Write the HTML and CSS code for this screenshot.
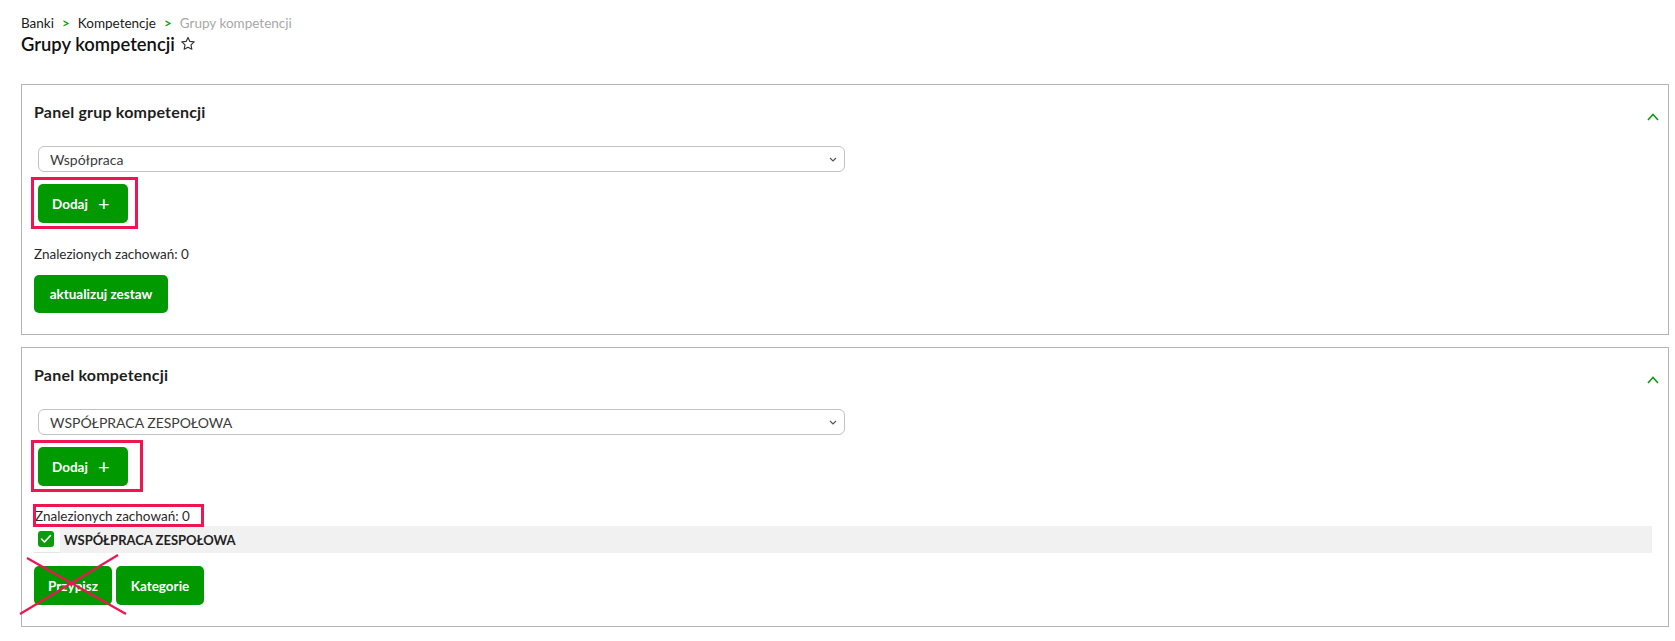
FILE: index.html
```html
<!DOCTYPE html>
<html lang="pl">
<head>
<meta charset="utf-8">
<title>Grupy kompetencji</title>
<link rel="stylesheet" href="styles.css">
</head>
<body>
<div class="page">
  <nav class="breadcrumb">
    <span class="crumb">Banki</span><span class="sep">&gt;</span><span class="crumb">Kompetencje</span><span class="sep">&gt;</span><span class="crumb current">Grupy kompetencji</span>
  </nav>
  <h1 class="page-title">Grupy kompetencji
    <svg class="star" width="16" height="15" viewBox="0 0 24 23"><path d="M12 2.2l2.9 6.1 6.6.8-4.9 4.6 1.3 6.6L12 17.1l-5.9 3.2 1.3-6.6-4.9-4.6 6.6-.8z" fill="none" stroke="#333" stroke-width="1.8" stroke-linejoin="round"/></svg>
  </h1>

  <section class="panel">
    <div class="panel-head">
      <h2 class="panel-title">Panel grup kompetencji</h2>
      <svg class="chev" width="12" height="8" viewBox="0 0 12 8"><path d="M1 7l5-5.5L11 7" fill="none" stroke="#119911" stroke-width="1.6"/></svg>
    </div>
    <div class="field">
      <div class="select"><span>Współpraca</span>
        <svg width="8" height="5" viewBox="0 0 8 5"><path d="M1 1l3 3 3-3" fill="none" stroke="#555" stroke-width="1.2"/></svg>
      </div>
      <div class="marked add-wrap">
        <button class="btn btn-add">Dodaj <span class="plus">+</span></button>
        <span class="mark mark-add1"></span>
      </div>
    </div>
    <p class="count count-1">Znalezionych zachowań: 0</p>
    <button class="btn btn-wide">aktualizuj zestaw</button>
  </section>

  <section class="panel">
    <div class="panel-head">
      <h2 class="panel-title">Panel kompetencji</h2>
      <svg class="chev" width="12" height="8" viewBox="0 0 12 8"><path d="M1 7l5-5.5L11 7" fill="none" stroke="#119911" stroke-width="1.6"/></svg>
    </div>
    <div class="field">
      <div class="select"><span>WSPÓŁPRACA ZESPOŁOWA</span>
        <svg width="8" height="5" viewBox="0 0 8 5"><path d="M1 1l3 3 3-3" fill="none" stroke="#555" stroke-width="1.2"/></svg>
      </div>
      <div class="marked add-wrap">
        <button class="btn btn-add">Dodaj <span class="plus">+</span></button>
        <span class="mark mark-add2"></span>
      </div>
    </div>
    <div class="marked count-wrap">
      <p class="count">Znalezionych zachowań: 0</p>
      <span class="mark mark-count"></span>
    </div>
    <div class="row">
      <div class="row-check">
        <span class="checkbox"><svg width="12" height="10" viewBox="0 0 12 10"><path d="M1.5 5l3 3 6-6.5" fill="none" stroke="#fff" stroke-width="1.6" stroke-linecap="round" stroke-linejoin="round"/></svg></span>
      </div>
      <div class="row-label">WSPÓŁPRACA ZESPOŁOWA</div>
    </div>
    <div class="actions">
      <div class="marked">
        <button class="btn btn-assign">Przypisz</button>
        <svg class="cross" width="110" height="64" viewBox="0 0 110 64"><path d="M9 5L108 61M100 2L2 61" stroke="#ee1550" stroke-width="2.2" fill="none"/></svg>
      </div>
      <button class="btn btn-cat">Kategorie</button>
    </div>
  </section>
</div>
</body>
</html>
```

FILE: styles.css
```css
* { box-sizing: border-box; }
html, body { margin: 0; padding: 0; background: #fff; }
body {
  font-family: "Lato", "Open Sans", sans-serif;
  color: #1e1e1e;
}
.page { padding: 14px 6px 0 21px; }

.breadcrumb { font-size: 13.5px; line-height: 18px; }
.crumb { color: #1b1b1b; }
.crumb.current { color: #a8a8a8; }
.sep { color: #14a014; font-weight: 700; margin: 0 8px 0 8px; }

.page-title {
  margin: 0 0 28px;
  font-size: 18.4px;
  line-height: 24px;
  font-weight: 600;
  display: flex;
  align-items: center;
  gap: 5px;
  color: #111;
}
.star { margin-top: -2px; }

.panel {
  border: 1px solid #b4b4b4;
  padding: 0 12px 21px;
  margin-bottom: 12px;
}
.panel-head {
  height: 52px;
  display: flex;
  align-items: center;
  justify-content: space-between;
}
.panel-title { margin: 0; font-size: 16px; font-weight: 700; color: #1e1e1e; letter-spacing: 0.2px; }
.chev { margin-top: 12px; margin-right: -3px; }

.field { padding-left: 4px; }
.select {
  margin-top: 9px;
  width: 807px;
  height: 26px;
  border: 1px solid #c2c2c2;
  border-radius: 6px;
  display: flex;
  align-items: center;
  justify-content: space-between;
  padding: 0 7px 0 11px;
  font-size: 14px;
  color: #3c3c3c;
}
.select svg { margin-top: 1px; }

.marked { position: relative; display: flex; width: fit-content; }
.add-wrap { margin-top: 12px; }

.btn {
  font-family: inherit;
  background: #009900;
  color: #fff;
  border: none;
  border-radius: 5px;
  font-size: 13.5px;
  font-weight: 700;
  height: 39px;
  padding: 0 13px;
  cursor: pointer;
  display: inline-flex;
  align-items: center;
}
.btn-add { width: 90px; padding: 0 14px; }
.plus { font-size: 20px; font-weight: 400; margin-left: 10px; line-height: 1; margin-top: -2px; }
.btn-wide { margin-top: 12px; height: 38px; width: 134px; justify-content: center; }
.btn-assign { width: 78px; justify-content: center; }
.btn-cat { width: 88px; justify-content: center; }

.count { margin: 0; font-size: 13.5px; line-height: 18px; color: #2a2a2a; }
.count-1 { margin-top: 22px; }
.count-wrap { margin-top: 21px; padding-left: 1px; width: 170px; }

.mark { position: absolute; border: 3px solid #ee1550; pointer-events: none; }
.mark-add1 { left: -7px; top: -7px; right: -10px; bottom: -6px; }
.mark-add2 { left: -7px; top: -7px; right: -15px; bottom: -6px; }
.mark-count { left: -1px; top: -3px; right: 0; bottom: -2px; }

.row { display: flex; height: 27px; margin-top: 1px; margin-right: 4px; }
.row-check {
  width: 26px;
  display: flex;
  align-items: center;
  justify-content: flex-end;
  padding-right: 6px;
  border-bottom: 1px solid #e4e4e4;
}
.checkbox {
  width: 16px; height: 16px;
  background: #0b9b0b;
  border-radius: 3px;
  display: flex; align-items: center; justify-content: center;
}
.row-label {
  flex: 1;
  background: #f1f1f1;
  display: flex;
  align-items: center;
  padding-left: 4px;
  font-size: 13px;
  font-weight: 700;
  color: #222;
}

.actions { display: flex; gap: 4px; margin-top: 13px; }
.cross { position: absolute; left: -16px; top: -13px; pointer-events: none; }
```
